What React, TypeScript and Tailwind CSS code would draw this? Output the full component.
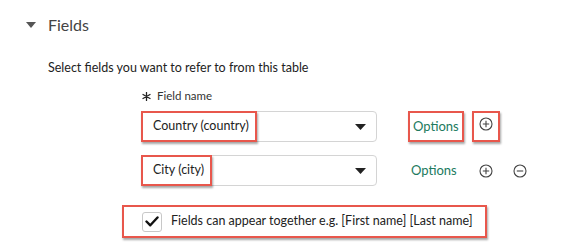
import React from "react";

const font = { fontFamily: "Lato, 'Noto Sans', sans-serif" };

function CirclePlus() {
  return (
    <svg width="14" height="14" viewBox="0 0 14 14" fill="none" stroke="#444" strokeWidth="1.1">
      <circle cx="7" cy="7" r="6" />
      <path d="M7 3.8v6.4M3.8 7h6.4" />
    </svg>
  );
}
function CircleMinus() {
  return (
    <svg width="14" height="14" viewBox="0 0 14 14" fill="none" stroke="#444" strokeWidth="1.1">
      <circle cx="7" cy="7" r="6" />
      <path d="M3.8 7h6.4" />
    </svg>
  );
}
function Caret() {
  return (
    <svg width="11" height="6" viewBox="0 0 11 6">
      <path d="M0 0h11L5.5 6z" fill="#222" />
    </svg>
  );
}
function Asterisk() {
  return (
    <svg width="9" height="9" viewBox="0 0 9 9" stroke="#222" strokeWidth="1.3" strokeLinecap="round">
      <path d="M4.5 0.5v8M1 2.5l7 4M1 6.5l7-4" />
    </svg>
  );
}

function Select({ label }: { label: string }) {
  return (
    <div className="relative flex h-[31px] w-[236px] items-center justify-between rounded-[4px] border border-[#d4d4d4] bg-white pr-[10px]">
      <span className="ml-[-1px] flex h-[31px] items-center border-2 border-[#e8574c] bg-white pl-[10px] pr-[6px] text-[12.5px] text-[#222] shadow-[1px_2px_2px_rgba(0,0,0,0.35)]">
        {label}
      </span>
      <Caret />
    </div>
  );
}

export default function App() {
  return (
    <div className="h-[250px] w-[578px] overflow-hidden bg-white" style={font}>
      <div className="flex items-center pl-[26px] pt-[15px]">
        <svg width="10" height="6" viewBox="0 0 10 6">
          <path d="M0 0h10L5 6z" fill="#555" />
        </svg>
        <span className="ml-[12px] text-[16px] leading-[20px] text-[#444]">Fields</span>
      </div>
      <div className="ml-[48px] mt-[25px] text-[12.5px] leading-[16px] text-[#222]">
        Select fields you want to refer to from this table
      </div>
      <div className="ml-[142px] mt-[13px] flex items-center text-[11.5px] leading-[14px] text-[#333]">
        <span className="mr-[6px] flex">
          <Asterisk />
        </span>
        Field name
      </div>
      <div className="ml-[141px] mt-[8px] flex items-center">
        <Select label="Country (country)" />
        <span className="ml-[31px] flex h-[31px] items-center border-2 border-[#e8574c] px-[3px] text-[13px] text-[#217a5e] shadow-[1px_2px_2px_rgba(0,0,0,0.35)]">
          Options
        </span>
        <span className="ml-[8px] flex h-[31px] w-[28px] items-start justify-center border-2 border-[#e8574c] pt-[4px] shadow-[1px_2px_2px_rgba(0,0,0,0.35)]">
          <CirclePlus />
        </span>
      </div>
      <div className="ml-[141px] mt-[13px] flex items-center">
        <Select label="City (city)" />
        <span className="ml-[34px] text-[13px] text-[#217a5e]">Options</span>
        <span className="ml-[22px] flex"><CirclePlus /></span>
        <span className="ml-[20px] flex"><CircleMinus /></span>
      </div>
      <div className="ml-[122px] mt-[19px] flex h-[33px] w-[365px] items-center border-2 border-[#e8574c] pl-[18px] shadow-[1px_2px_2px_rgba(0,0,0,0.35)]">
        <span className="flex h-[20px] w-[20px] shrink-0 items-center justify-center rounded-[3px] border border-[#c8c8c8]">
          <svg width="14" height="11" viewBox="0 0 14 11" fill="none" stroke="#111" strokeWidth="2.4" strokeLinecap="round" strokeLinejoin="round">
            <path d="M1.5 5.5l3.8 3.8L12.5 1.5" />
          </svg>
        </span>
        <span className="ml-[9px] whitespace-nowrap text-[12.5px] text-[#222]">Fields can appear together e.g. [First name] [Last name]</span>
      </div>
    </div>
  );
}
